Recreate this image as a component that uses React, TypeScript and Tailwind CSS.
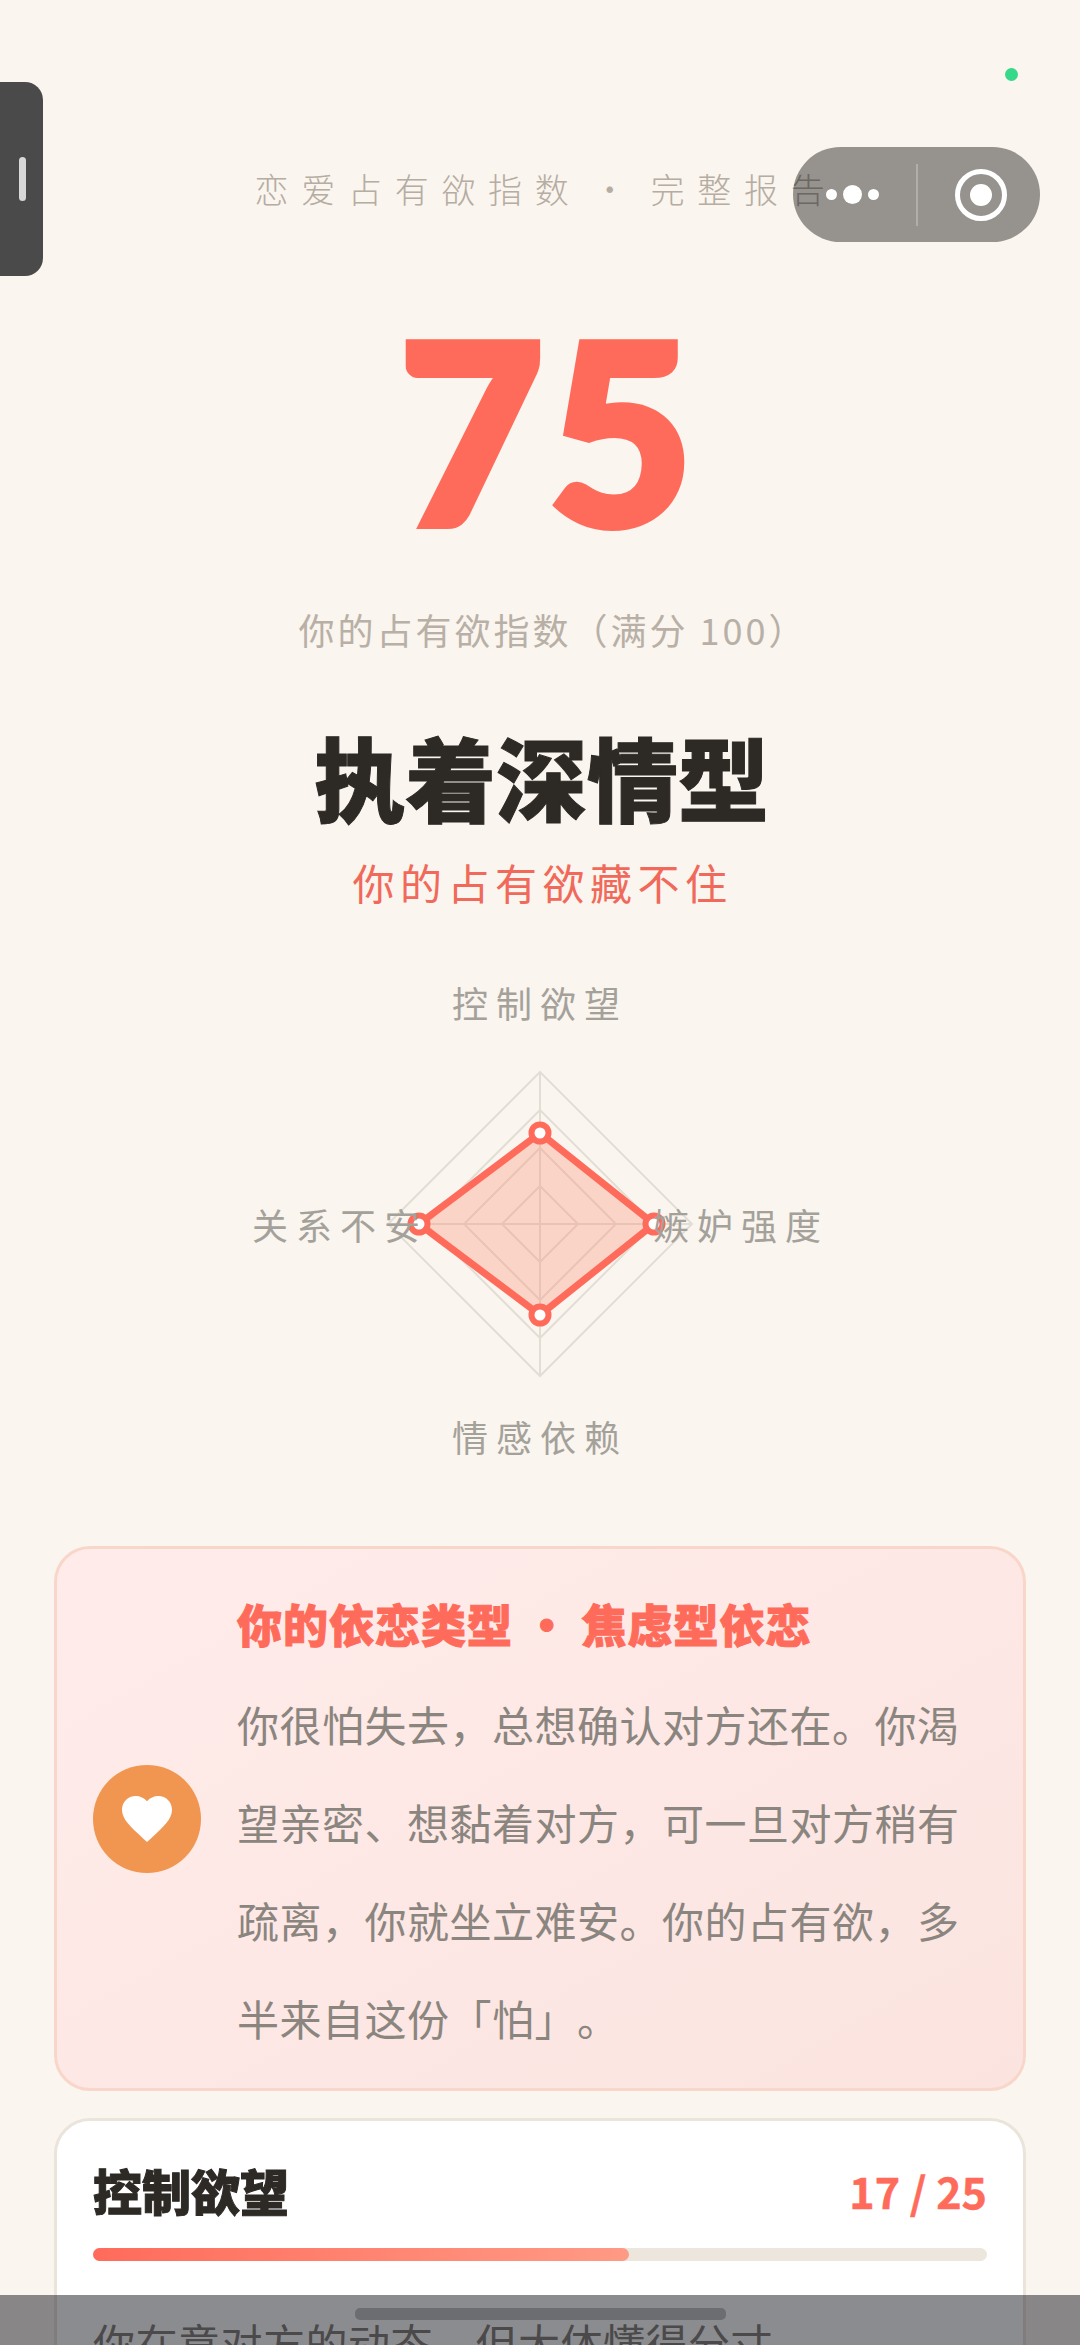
const CJK = "font-['Noto_Sans_CJK_SC','Noto_Sans',sans-serif]";

const RINGS = [152, 114, 76, 38];
const CX = 160;
const CY = 160;

function diamond(t: number, r: number, b: number, l: number) {
  return `${CX},${CY - t} ${CX + r},${CY} ${CX},${CY + b} ${CX - l},${CY}`;
}

function Radar() {
  const t = 91;
  const r = 114;
  const b = 91;
  const l = 121;
  return (
    <svg width="320" height="320" viewBox="0 0 320 320">
      {RINGS.map((n) => (
        <polygon key={n} points={diamond(n, n, n, n)} fill="none" stroke="#e3ded5" strokeWidth="2" />
      ))}
      <line x1={CX} y1={CY - 152} x2={CX} y2={CY + 152} stroke="#e3ded5" strokeWidth="2" />
      <line x1={CX - 152} y1={CY} x2={CX + 152} y2={CY} stroke="#e3ded5" strokeWidth="2" />
      <polygon
        points={diamond(t, r, b, l)}
        fill="#ff7557"
        fillOpacity="0.25"
        stroke="#ff6b5b"
        strokeWidth="7"
        strokeLinejoin="round"
      />
      {[
        [CX, CY - t],
        [CX + r, CY],
        [CX, CY + b],
        [CX - l, CY],
      ].map(([x, y]) => (
        <circle key={`${x}-${y}`} cx={x} cy={y} r="8.5" fill="#ffffff" stroke="#ff6b5b" strokeWidth="6" />
      ))}
    </svg>
  );
}

function Heart() {
  return (
    <svg width="50" height="46" viewBox="2 3 20 18.35" fill="#ffffff">
      <path d="M12 21.35l-1.45-1.32C5.4 15.36 2 12.28 2 8.5 2 5.42 4.42 3 7.5 3c1.74 0 3.41.81 4.5 2.09C13.09 3.81 14.76 3 16.5 3 19.58 3 22 5.42 22 8.5c0 3.78-3.4 6.86-8.55 11.54L12 21.35z" />
    </svg>
  );
}

function WeChatCapsule() {
  return (
    <div className="absolute left-[793px] top-[147px] flex h-[95px] w-[247px] items-center rounded-full bg-[rgba(0,0,0,0.4)]">
      <div className="flex w-[123px] items-center justify-end gap-[6px] pr-[37px]">
        <span className="h-[11px] w-[11px] rounded-full bg-white" />
        <span className="h-[19px] w-[19px] rounded-full bg-white" />
        <span className="h-[11px] w-[11px] rounded-full bg-white" />
      </div>
      <div className="h-[62px] w-[2px] bg-white/25" />
      <div className="flex flex-1 items-center justify-center pl-[3px]">
        <div className="flex h-[52px] w-[52px] items-center justify-center rounded-full border-[5px] border-white">
          <div className="h-[22px] w-[22px] rounded-full bg-white" />
        </div>
      </div>
    </div>
  );
}

export default function App() {
  return (
    <div className={`relative h-[2345px] w-[1080px] overflow-hidden bg-[#faf5ee] ${CJK} [text-spacing-trim:space-all]`}>
      {/* Header */}
      <div className="pl-[12px] pt-[167px] text-center text-[34px] font-light leading-[44px] tracking-[12.7px] [word-spacing:-9px] whitespace-pre text-[#b5aca2]">
        恋爱占有欲指数 · 完整报告
      </div>

      {/* Score */}
      <div className="mt-[67px] pl-[16px] text-center font-['Lato',sans-serif] text-[250px] font-black leading-[300px] tracking-[4px] text-[#ff6b5b] [-webkit-text-stroke:8px_#ff6b5b]">
        75
      </div>
      <div className="mt-[26px] pl-[26px] text-center text-[36px] leading-[50px] tracking-[3px] text-[#b8b0a6]">
        你的占有欲指数（满分 100）
      </div>

      {/* Type */}
      <div className="mt-[66px] pl-[3px] text-center text-[91px] font-black leading-[110px] text-[#2d2a26] [-webkit-text-stroke:1px_#2d2a26]">
        执着深情型
      </div>
      <div className="mt-[22px] pl-[5px] text-center text-[42px] leading-[60px] tracking-[5.5px] text-[#f0695a]">
        你的占有欲藏不住
      </div>

      {/* Radar */}
      <div className="mt-[68px] text-center text-[36px] leading-[44px] tracking-[8px] text-[#a4a19b]">
        控制欲望
      </div>
      <div className="relative mt-[40px] flex justify-center">
        <Radar />
        <div className="absolute left-[252px] top-[138px] text-[36px] leading-[44px] tracking-[8px] text-[#a4a19b]">
          关系不安
        </div>
        <div className="absolute left-[653px] top-[138px] text-[36px] leading-[44px] tracking-[8px] text-[#a4a19b]">
          嫉妒强度
        </div>
      </div>
      <div className="mt-[30px] text-center text-[36px] leading-[44px] tracking-[8px] text-[#a4a19b]">
        情感依赖
      </div>

      {/* Attachment card */}
      <div className="mx-[54px] mt-[88px] flex items-center gap-[36px] rounded-[36px] border-[3px] border-[#f9d6ca] bg-linear-to-br from-[#ffecea] to-[#fbe4e0] pl-[36px] pr-[40px]">
        <div className="flex h-[108px] w-[108px] shrink-0 items-center justify-center rounded-full bg-[#f19651]">
          <Heart />
        </div>
        <div className="min-w-0 flex-1 pb-[21px] pt-[43px]">
          <div className="whitespace-pre text-[45px] font-black leading-[64px] tracking-[1px] text-[#ff6b5b] [-webkit-text-stroke:1px_#ff6b5b]">
            你的依恋类型 · 焦虑型依恋
          </div>
          <p className="mt-[19px] text-[42px] leading-[98px] tracking-[0.5px] text-[#8a857e]">
            你很怕失去，总想确认对方还在。你渴望亲密、想黏着对方，可一旦对方稍有疏离，你就坐立难安。你的占有欲，多半来自这份「怕」。
          </p>
        </div>
      </div>

      {/* Dimension card */}
      <div className="mx-[54px] mt-[27px] rounded-[36px] border-[3px] border-[#ebe4da] bg-white px-[36px] pt-[33px]">
        <div className="flex items-center justify-between">
          <div className="text-[49px] font-black leading-[72px] text-[#2d2a26] [-webkit-text-stroke:1px_#2d2a26]">控制欲望</div>
          <div className="text-[43px] font-bold leading-[72px] text-[#ff6b5b] [-webkit-text-stroke:0.5px_#ff6b5b]">17 / 25</div>
        </div>
        <div className="mt-[22px] h-[13px] w-full rounded-full bg-[#ece6dc]">
          <div className="h-full w-[60%] rounded-full bg-linear-to-r from-[#ff6b5b] to-[#ff9a85]" />
        </div>
        <p className="mt-[32px] text-[42px] leading-[98px] tracking-[0.5px] text-[#8a857e]">
          你在意对方的动态，但大体懂得分寸
        </p>
      </div>

      {/* Floating mini-program chrome */}
      <div className="absolute left-0 top-[82px] flex h-[194px] w-[43px] items-center justify-end rounded-r-[18px] bg-[#4a4a4a] pr-[17px]">
        <div className="h-[44px] w-[7px] rounded-full bg-[#d8d8d8]" />
      </div>
      <div className="absolute left-[1005px] top-[68px] h-[13px] w-[13px] rounded-full bg-[#36d88a]" />
      <WeChatCapsule />

      {/* Bottom bar */}
      <div className="absolute inset-x-0 top-[2295px] flex h-[50px] justify-center bg-[rgba(0,2,10,0.455)] pt-[13px]">
        <div className="h-[12px] w-[371px] rounded-[5px] bg-[rgba(0,0,0,0.22)]" />
      </div>
    </div>
  );
}
